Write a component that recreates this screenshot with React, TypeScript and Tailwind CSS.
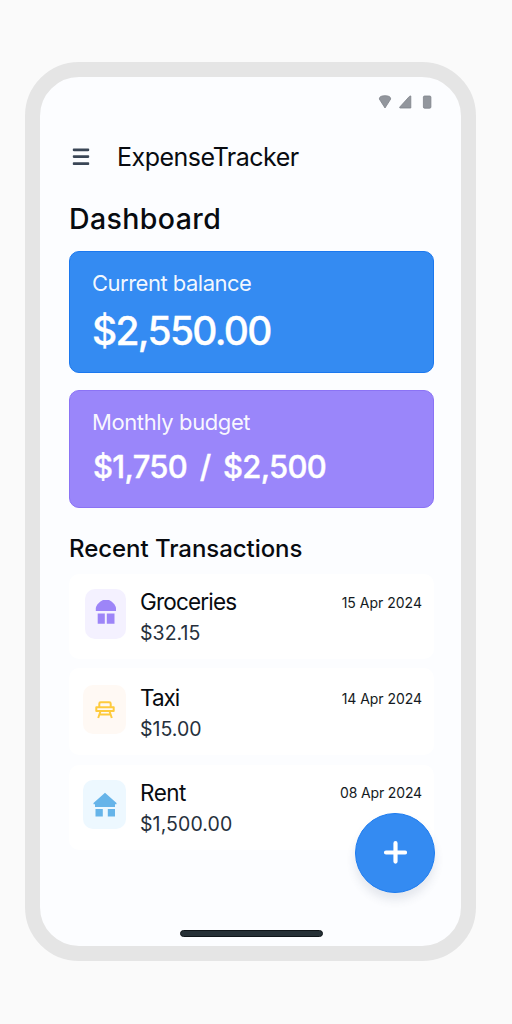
import type { ReactNode } from "react";

type Transaction = {
  name: string;
  amount: string;
  date: string;
  card: string;
  tile: string;
  title: string;
  sum: string;
  day: string;
  icon: ReactNode;
};

const ShopIcon = () => (
  <svg width="22" height="26" viewBox="0 0 22 26" fill="#9d85f8">
    <path d="M8 1h6c3.500 1.500 6.500 5 7 8v3H.8V9c.5-3 3.700-6.500 7.200-8Z" />
    <path d="M2.700 14.400h7.100v10.300H2.700zM11.800 14.400h7.700v10.300h-7.700z" />
  </svg>
);

const BenchIcon = () => (
  <svg width="20" height="18" viewBox="0 0 20 18" fill="none" stroke="#fecb3e" strokeWidth="2" strokeLinejoin="round">
    <path d="M4.300 6V2.700Q4.300 1.300 5.700 1.300h8.600q1.400 0 1.400 1.400V6M1.300 6.200h17.400v3.900H1.300zM5.500 10.300 3.200 17M14.500 10.300l2.300 6.700M4.700 13.400h10.600" />
  </svg>
);

const HouseIcon = () => (
  <svg width="24" height="26" viewBox="0 0 24 26" fill="#66b4e9">
    <path d="M12 .8 23.500 11v1.300H22V15H2v-2.700H.5V11Z" />
    <path d="M2.500 17h7.300v7.500H2.500zM14.800 17h7.200v7.500h-7.200z" />
  </svg>
);

const transactions: Transaction[] = [
  {
    name: "Groceries",
    amount: "$32.15",
    date: "15 Apr 2024",
    card: "mt-[10px] h-[85px] pt-[15px] pl-4",
    tile: "mr-[14px] h-[50px] w-[41px] bg-[#f4f1ff] pb-1",
    title: "tracking-[-0.8px]",
    sum: "tracking-[0.05px]",
    day: "mt-[4px] tracking-[0px]",
    icon: <ShopIcon />,
  },
  {
    name: "Taxi",
    amount: "$15.00",
    date: "14 Apr 2024",
    card: "mt-[9px] h-[87px] pt-[17px] pl-[14px]",
    tile: "mr-[14px] h-[49px] w-[43px] bg-[#fff9f4]",
    title: "tracking-[-1px]",
    sum: "tracking-[0px]",
    day: "mt-[4px] tracking-[-0.05px]",
    icon: <BenchIcon />,
  },
  {
    name: "Rent",
    amount: "$1,500.00",
    date: "08 Apr 2024",
    card: "mt-[10px] h-[85px] pt-[15px] pl-[14px]",
    tile: "mr-[14px] h-[49px] w-[43px] bg-[#edf8ff]",
    title: "tracking-[-0.5px]",
    sum: "tracking-[0.1px]",
    day: "mt-[3px] tracking-[-0.15px]",
    icon: <HouseIcon />,
  },
];

function TransactionCard({ item }: { item: Transaction }) {
  return (
    <li className={`flex items-start rounded-[10px] bg-white pr-3 ${item.card}`}>
      <div className={`flex shrink-0 items-center justify-center rounded-[10px] ${item.tile}`}>{item.icon}</div>
      <div className="-mt-px flex-1 whitespace-nowrap">
        <p className={`text-[22.500px] leading-[28px] text-[#080b10] ${item.title}`}>{item.name}</p>
        <p className={`mt-[3px] text-[19.500px] leading-[28px] text-[#26303c] ${item.sum}`}>{item.amount}</p>
      </div>
      <time className={`text-[14px] leading-5 whitespace-nowrap text-[#141a22] ${item.day}`}>{item.date}</time>
    </li>
  );
}

export default function App() {
  return (
    <div className="h-[1024px] w-[512px] bg-[#fafafa] pt-[62px] pl-[25px] font-['Inter',sans-serif]">
      <div className="relative flex h-[899px] w-[451px] flex-col rounded-[54px] border-[15px] border-[#e5e5e5] bg-[#fcfdff] pr-[27px] pl-[29px]">
        <div className="flex h-[50px] justify-end pt-[18px]">
          <svg width="56" height="14" viewBox="0 0 56 14" fill="#92969d" stroke="#7f838a" strokeWidth=".8" strokeLinejoin="round">
            <path d="M1.300 4Q1.300 .7 7 .7T12.700 4L7 13Z" />
            <path d="M32.800 1v12H22.100Q21.300 13 21.800 12L31.300 1.500Q32.300 .6 32.800 1Z" />
            <rect x="45.400" y="1" width="7.500" height="12.200" rx="1.200" />
          </svg>
        </div>
        <header className="mt-[12px] flex h-9 items-center">
          <button aria-label="Menu" className="ml-1 flex w-4">
            <svg width="17" height="18" viewBox="0 0 17 18" className="shrink-0 -translate-x-[0.5px]" stroke="#3a4656" strokeWidth="2.700" strokeLinecap="round">
              <path d="M1.400 1.800h14.200M1.400 8.600h14.200M1.400 15.700h14.200" />
            </svg>
          </button>
          <h1 className="ml-[28px] text-[25px] leading-9 tracking-[-0.5px] whitespace-nowrap text-[#080b10]">ExpenseTracker</h1>
        </header>
        <h2 className="mt-[26px] text-[28.500px] leading-9 font-medium tracking-[0.4px] text-[#080b10]">Dashboard</h2>

        <section className="mt-[14px] h-[122px] shrink-0 rounded-[10px] border border-[#1b78ef] bg-[#348bf2] pt-[16px] pl-[22px] whitespace-nowrap text-white">
          <p className="text-[22px] leading-[30px] font-normal tracking-[-0.5px] text-white/95">Current balance</p>
          <p className="mt-[9px] text-[39px] leading-[48px] font-medium tracking-[-1.7px] [-webkit-text-stroke:0.3px_white]">$2,550.00</p>
        </section>
        <section className="mt-[17px] h-[118px] shrink-0 rounded-[10px] border border-[#8b73f5] bg-[#9a86fa] pt-[16px] pl-[22px] whitespace-nowrap text-white">
          <p className="text-[22px] leading-[30px] font-normal tracking-[-0.4px] text-white/95">Monthly budget</p>
          <p className="mt-[10px] ml-px text-[31px] leading-[40px] font-medium tracking-[-0.7px] [word-spacing:5px] [-webkit-text-stroke:0.4px_white]">$1,750 / $2,500</p>
        </section>

        <h3 className="mt-[26px] text-[24px] leading-[30px] font-medium tracking-[-0.05px] whitespace-nowrap text-[#080b10]">Recent Transactions</h3>
        <ul>
          {transactions.map((item) => (
            <TransactionCard key={item.name} item={item} />
          ))}
        </ul>

        <button
          aria-label="Add transaction"
          className="absolute right-[26px] bottom-[53px] flex size-20 items-center justify-center rounded-full border border-[#1d7cf0] bg-[#348bf2] shadow-[0_7px_10px_rgba(60,70,110,0.12)]"
        >
          <svg width="24" height="24" viewBox="0 0 24 24" stroke="#fff" strokeWidth="4.200" strokeLinecap="round">
            <path d="M12.500 2.200v18.400M3 11.500h19" />
          </svg>
        </button>
        <div className="mt-auto mb-[9px] ml-[111px] h-[7px] w-[143px] shrink-0 rounded-full border border-[#101519] bg-[#263036]" />
      </div>
    </div>
  );
}
